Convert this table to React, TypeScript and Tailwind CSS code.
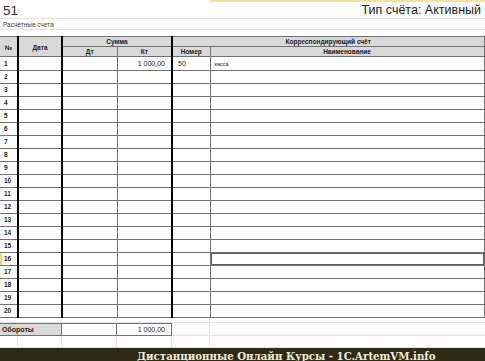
import React from 'react'

const ROWS = Array.from({ length: 20 }, (_, i) => i + 1)

const sans = "[font-family:'Liberation_Sans',Arial,sans-serif]"
const line = 'border-[#727272]'

export default function App() {
  return (
    <div className={`relative w-[485px] h-[361px] overflow-hidden bg-white text-[#222] ${sans}`}>
      {/* column header highlight */}
      <div className="absolute left-[210px] top-0 w-[275px] h-[2px] bg-[#f2e2a8]" />

      {/* Title rows */}
      <div className="flex h-[19px] items-end justify-between border-b border-[#e2e2e2] px-[3px]">
        <span className="text-[13.5px] leading-[15px] text-[#333]">51</span>
        <span className="text-[12.5px] leading-[16px] text-[#222] mr-[1px]">Тип счёта: Активный</span>
      </div>
      <div className="h-[11px] border-b border-[#e2e2e2] px-[3px] text-[6.5px] leading-[11px] text-[#444]">Расчетные счета</div>
      <div className="h-[6px]" />

      {/* Ledger table */}
      <table className="border-collapse table-fixed w-[484px]">
        <colgroup>
          <col className="w-[18px]" />
          <col className="w-[44px]" />
          <col className="w-[55px]" />
          <col className="w-[55px]" />
          <col className="w-[38px]" />
          <col className="w-[274px]" />
        </colgroup>
        <thead className="text-[6.5px] font-bold">
          <tr className="h-[10px]">
            <th rowSpan={2} className={`border border-l-0 ${line} border-r-2 border-r-black bg-[#d9d9d9] p-0 pt-[2px]`}>№</th>
            <th rowSpan={2} className={`border ${line} border-r-2 border-r-black bg-[#d9d9d9] p-0 pt-[2px]`}>Дата</th>
            <th colSpan={2} className={`border ${line} border-r-2 border-r-black bg-[#d9d9d9] p-0 leading-[9px]`}>Сумма</th>
            <th colSpan={2} className={`border ${line} bg-[#d9d9d9] p-0 leading-[9px]`}>Корреспондирующий счёт</th>
          </tr>
          <tr className="h-[10px]">
            <th className={`border ${line} bg-[#d9d9d9] p-0 leading-[9px]`}>Дт</th>
            <th className={`border ${line} border-r-2 border-r-black bg-[#d9d9d9] p-0 leading-[9px]`}>Кт</th>
            <th className={`border ${line} bg-[#d9d9d9] p-0 leading-[9px]`}>Номер</th>
            <th className={`border ${line} bg-[#d9d9d9] p-0 leading-[9px]`}>Наименование</th>
          </tr>
        </thead>
        <tbody className="text-[7px]">
          {ROWS.map(n => (
            <tr key={n} className={n === 1 ? 'h-[14px]' : 'h-[13px]'}>
              <td className={`border border-l-0 ${line} border-r-2 border-r-black p-0 pl-[4px] font-bold text-[6.5px] leading-[10px] ${n === 16 ? 'shadow-[inset_2px_0_0_#f0d98c]' : ''}`}>{n}</td>
              <td className={`border ${line} border-r-2 border-r-black p-0`} />
              <td className={`border ${line} p-0`} />
              <td className={`border ${line} border-r-2 border-r-black p-0 pr-[6px] text-right leading-[10px]`}>{n === 1 ? '1 000,00' : ''}</td>
              <td className={`border ${line} p-0 pl-[5px] leading-[10px]`}>{n === 1 ? '50' : ''}</td>
              <td className={`border ${line} p-0 pl-[4px] text-[5.5px] leading-[10px] ${n === 16 ? 'shadow-[inset_0_0_0_1px_#5e5e5e]' : ''}`}>{n === 1 ? 'касса' : ''}</td>
            </tr>
          ))}
        </tbody>
      </table>

      {/* Totals area */}
      <div className="flex h-[5px] border-b border-[#e4e4e4]">
        <div className="w-[62px] border-r border-[#e4e4e4]" />
        <div className="w-[55px] border-r border-[#e4e4e4]" />
        <div className="w-[55px] border-r border-[#e4e4e4]" />
        <div className="w-[38px] border-r border-[#e4e4e4]" />
      </div>
      <div className="flex h-[13px]">
        <div className={`w-[62px] border ${line} border-l-0 bg-[#d9d9d9] pl-[2px] text-[7px] font-bold leading-[11px]`}>Обороты</div>
        <div className={`w-[55px] border border-l-0 ${line}`} />
        <div className={`w-[55px] border border-l-0 ${line} pr-[6px] text-right text-[7px] leading-[11px]`}>1 000,00</div>
        <div className="w-[38px] border-r border-b border-[#e4e4e4]" />
        <div className="flex-1 border-b border-[#e4e4e4]" />
      </div>
      <div className="flex h-[12px] border-b border-[#e4e4e4]">
        <div className="w-[18px] border-r border-[#e4e4e4]" />
        <div className="w-[44px] border-r border-[#e4e4e4]" />
        <div className="w-[55px] border-r border-[#e4e4e4]" />
        <div className="w-[55px] border-r border-[#e4e4e4]" />
        <div className="w-[38px] border-r border-[#e4e4e4]" />
      </div>

      {/* Footer band */}
      <div className="flex h-[15px] items-center bg-[#2f2b13] pl-[137px]">
        <span className="[font-family:'DejaVu_Serif',serif] text-[10.2px] font-bold leading-[14px] text-[#efeada] whitespace-nowrap">
          Дистанционные Онлайн Курсы - 1C.ArtemVM.info
        </span>
      </div>
    </div>
  )
}
